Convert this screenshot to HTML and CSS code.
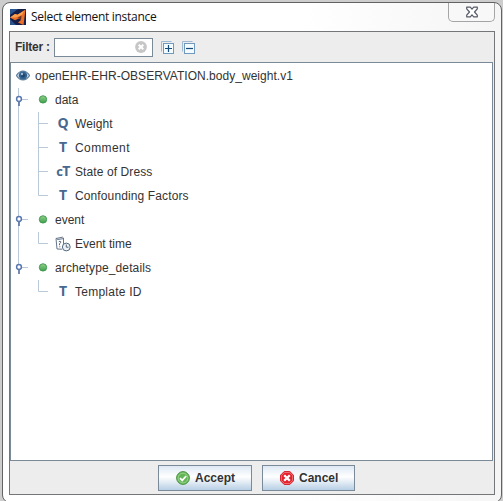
FILE: index.html
```html
<!DOCTYPE html>
<html lang="en">
<head>
<meta charset="utf-8">
<title>Select element instance</title>
<link rel="stylesheet" href="styles.css">
</head>
<body>
<svg class="defs" width="0" height="0" aria-hidden="true">
  <defs>
    <linearGradient id="green" x1="0" y1="0" x2="0" y2="1"><stop offset="0" stop-color="#8fd08a"/><stop offset="1" stop-color="#3fa04b"/></linearGradient>
    <symbol id="branch" viewBox="0 0 18 24">
      <path d="M7.500 0v24M8 11.500h9" stroke="#b9c9da" fill="none"/>
      <path d="M8 13v5" stroke="#52709f" stroke-width="1.600"/>
      <circle cx="8" cy="11" r="2.400" fill="#fff" stroke="#5878b0" stroke-width="1.500"/>
    </symbol>
    <symbol id="branch-last" viewBox="0 0 18 24">
      <path d="M7.500 0v11M8 11.500h9" stroke="#b9c9da" fill="none"/>
      <path d="M8 13v5" stroke="#52709f" stroke-width="1.600"/>
      <circle cx="8" cy="11" r="2.400" fill="#fff" stroke="#5878b0" stroke-width="1.500"/>
    </symbol>
    <symbol id="leaf" viewBox="0 0 38 24"><path d="M7.500 0v24M27.500 0v24M28 11.500h9" stroke="#b9c9da" fill="none"/></symbol>
    <symbol id="leaf-last" viewBox="0 0 38 24"><path d="M7.500 0v24M27.500 0v11.500h9.500" stroke="#b9c9da" fill="none"/></symbol>
    <symbol id="leaf-end" viewBox="0 0 38 24"><path d="M27.500 0v11.500h9.500" stroke="#b9c9da" fill="none"/></symbol>
    <symbol id="dot" viewBox="0 0 10 10"><circle cx="5" cy="4.400" r="3.700" fill="url(#green)" stroke="#3e9650" stroke-width=".9"/></symbol>
  </defs>
</svg>
<div class="window">
  <header class="titlebar">
    <svg class="logo" width="16" height="16" viewBox="0 0 16 16">
      <rect width="16" height="16" fill="#151f4a"/>
      <path d="M0 0h8L0 6zM0 10l6 6H0z" fill="#2a558c"/>
      <path d="M0 8.500 5 5l2.500.8L15.500.500 13.500 16 8 13.500l3-2.500-1.500-1.800-4.500 2z" fill="#ee6f26"/>
      <path d="M0 8.500 5 5l2.500.8L14 1.800 12 6 5.500 8.500z" fill="#f9a04e"/>
      <path d="m7 9.300 4.500-2.800-.5 4.500-1.500-1.800z" fill="#6b3423"/>
    </svg>
    <span class="title">Select element instance</span>
    <div class="close"><svg width="14" height="12" viewBox="0 0 14 12"><path d="M1.700 1.200h3.600L7 3.200l1.700-2h3.600v1.600L9.500 6l2.800 3.200v1.600H8.700L7 8.800l-1.700 2H1.700V9.200L4.500 6 1.700 2.800z" fill="#fff" stroke="#555a64" stroke-width="1.200" stroke-linejoin="round"/></svg></div>
  </header>
  <main class="content">
    <div class="toolbar">
      <label class="filter-label">Filter :</label>
      <div class="field"><svg width="12" height="12" viewBox="0 0 12 12"><circle cx="6" cy="6" r="5.900" fill="#c6c6c6"/><path d="m3.700 3.700 4.600 4.600m0-4.600L3.700 8.300" stroke="#fff" stroke-width="2"/></svg></div>
      <svg class="expand" width="13" height="13" viewBox="0 0 13 13"><path d="M.5 10.500V.5h10" fill="none" stroke="#9fb9d0"/><rect x="2.500" y="2.500" width="10" height="10" fill="#f2fbff" stroke="#7198bd"/><path d="M4 7.500h7M7.500 4v7" stroke="#154a7c" stroke-width="1.200"/></svg>
      <svg class="collapse" width="13" height="13" viewBox="0 0 13 13"><path d="M.5 10.500V.5h10" fill="none" stroke="#9fb9d0"/><rect x="2.500" y="2.500" width="10" height="10" fill="#f2fbff" stroke="#7198bd"/><path d="M4 7.500h7" stroke="#154a7c" stroke-width="1.200"/></svg>
    </div>
    <div class="tree">
      <div class="row root">
        <svg width="14" height="12" viewBox="0 0 14 12"><path d="M.4 5.500C2.500 2.300 4.500 1 7 1s4.500 1.300 6.600 4.500C11.500 8.700 9.500 10 7 10S2.500 8.700.4 5.500z" fill="#c9d8e4" stroke="#5f7f9f" stroke-width="1.200"/><circle cx="7" cy="5.500" r="4.200" fill="#33628f"/><circle cx="7" cy="5.500" r="2" fill="#1c446e"/><circle cx="6" cy="4" r="1.200" fill="#9cbbd4"/></svg>
        <span class="wide-xs">openEHR-EHR-OBSERVATION.body_weight.v1</span>
      </div>
      <div class="row"><svg class="branch"><use href="#branch"/></svg><svg class="dot"><use href="#dot"/></svg><span>data</span></div>
      <div class="row"><svg class="leaf"><use href="#leaf"/></svg><b class="type">Q</b><span class="wide-s">Weight</span></div>
      <div class="row"><svg class="leaf"><use href="#leaf"/></svg><b class="type">T</b><span class="wide-l">Comment</span></div>
      <div class="row"><svg class="leaf"><use href="#leaf"/></svg><b class="type pair"><i>c</i>T</b><span class="wide-s">State of Dress</span></div>
      <div class="row"><svg class="leaf"><use href="#leaf-last"/></svg><b class="type">T</b><span class="wide-m">Confounding Factors</span></div>
      <div class="row"><svg class="branch"><use href="#branch"/></svg><svg class="dot"><use href="#dot"/></svg><span>event</span></div>
      <div class="row"><svg class="leaf"><use href="#leaf-last"/></svg>
        <svg class="time" width="16" height="16" viewBox="0 0 16 16"><path d="M1 2.500 7.500 1.200 8.500 2v6M1 2.500l1 10.500 5 .2M1.200 2l1.300 1.500 5.500-.8" fill="none" stroke="#65758a"/><path d="M3.800 5.800q1.500-1.300 2 0 0 1-1.300 2v1.400M4.300 10.800h1" fill="none" stroke="#536680"/><circle cx="11.300" cy="11" r="3.900" fill="#edf2f6" stroke="#53677e"/><path d="M11.300 8.500v2.700h2.200" fill="none" stroke="#53677e"/></svg>
        <span>Event time</span></div>
      <div class="row"><svg class="branch"><use href="#branch-last"/></svg><svg class="dot"><use href="#dot"/></svg><span class="wide-m">archetype_details</span></div>
      <div class="row"><svg class="leaf"><use href="#leaf-end"/></svg><b class="type">T</b><span class="wide-t">Template ID</span></div>
    </div>
    <footer class="actions">
      <button class="btn"><svg width="14" height="14" viewBox="0 0 14 14"><circle cx="7" cy="7" r="6.400" fill="#62b554" stroke="#4b9347"/><circle cx="7" cy="7" r="4.900" fill="none" stroke="#a8dc98" stroke-width=".8"/><path d="m4 7.200 2.200 2.200L10.200 5" fill="none" stroke="#fff" stroke-width="1.800"/></svg><span>Accept</span></button>
      <button class="btn cancel"><svg width="14" height="14" viewBox="0 0 14 14"><path d="M4.200.5h5.600l3.700 3.700v5.600l-3.700 3.700H4.200L.5 9.800V4.200z" fill="#e5212d" stroke="#d32732"/><path d="M4.500 1.500h5l3 3v5l-3 3h-5l-3-3v-5z" fill="none" stroke="#f58a8e" stroke-width=".7"/><path d="m4.200 4.200 5.600 5.600m0-5.600L4.200 9.800" stroke="#fff" stroke-width="2.300"/></svg><span>Cancel</span></button>
    </footer>
  </main>
</div>
</body>
</html>
```
FILE: styles.css
```css
* { box-sizing: border-box; }
html { height: 100%; overflow: hidden; }
body {
  margin: 0;
  height: 501px;
  padding: 2px 1px 0 2px;
  overflow: hidden;
  background: #cdcdcd;
  font: 12px "Liberation Sans", Arial, sans-serif;
  color: #333;
}
.defs { position: absolute; }
svg { display: block; flex: none; }
.window {
  height: 501px;
  padding: 0 6px;
  border: 1px solid #626262;
  border-radius: 8px;
  background: linear-gradient(90deg, #fff 60%, #f5f5f5);
}
.titlebar { display: flex; height: 28px; padding: 6px 0 0 1px; }
.title {
  margin-left: 5px;
  font: 12px/16px "Open Sans", "Noto Sans", sans-serif;
  letter-spacing: -.3px;
  color: #111;
  white-space: nowrap;
}
.close {
  display: flex;
  align-items: center;
  justify-content: center;
  width: 47px;
  height: 19px;
  margin: -6px 0 0 auto;
  padding-left: 1px;
  border: 1px solid #a5a5a5;
  border-top: 0;
  border-radius: 0 0 5px 5px;
  background: #f8f8f8;
}
.content {
  display: flex;
  flex-direction: column;
  width: 486px;
  height: 464px;
  border: 1px solid #747678;
  background: #ededed;
}
.toolbar { display: flex; align-items: center; height: 30px; padding-left: 5px; }
.filter-label {
  width: 39px;
  font-weight: bold;
  line-height: 14px;
  letter-spacing: -.25px;
  white-space: nowrap;
}
.field {
  display: flex;
  align-items: center;
  justify-content: flex-end;
  width: 99px;
  height: 19px;
  padding-right: 5px;
  border: 1px solid #7a8a99;
  background: #fff;
}
.expand { margin: 1px 0 0 8px; }
.collapse { margin: 1px 0 0 8px; }
.tree {
  width: 483px;
  height: 399px;
  padding-top: 1px;
  border: 1px solid #7a8a99;
  background: #fff;
}
.row { display: flex; align-items: center; height: 24px; white-space: nowrap; }
.root { padding-left: 5px; }
.root span { margin-left: 5px; }
.wide-xs { letter-spacing: .03px; }
.wide-s { letter-spacing: .1px; }
.wide-m { letter-spacing: .12px; }
.wide-t { letter-spacing: .25px; }
.wide-l { letter-spacing: .42px; }
.branch { width: 18px; height: 24px; }
.dot { width: 10px; height: 10px; margin: 0 7px 0 9px; }
.leaf { width: 38px; height: 24px; }
.type {
  width: 25px;
  margin: 0 1px 2px 0;
  padding-left: 3px;
  text-align: center;
  font: bold 14px/16px "Open Sans", sans-serif;
  color: #48688f;
}
.pair { letter-spacing: -.6px; }
.type i { font-style: normal; font-size: 13px; }
.time { margin: 0 4px 0 6px; }
.actions { display: flex; justify-content: center; gap: 10px; padding: 4px 0 0 9px; }
.btn {
  display: flex;
  align-items: center;
  width: 94px;
  height: 26px;
  padding: 0 0 0 17px;
  border: 1px solid #7a8a99;
  background: linear-gradient(#dde8f3, #fff 45%, #b8cfe5);
  font: bold 12px "Liberation Sans", Arial, sans-serif;
  color: #333;
}
.cancel { width: 93px; }
.btn span { margin-left: 5px; }
```
